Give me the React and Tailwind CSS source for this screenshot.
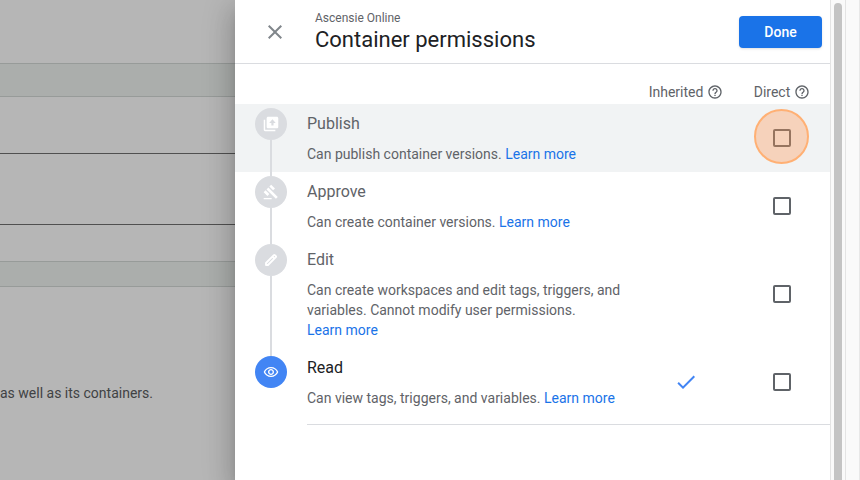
import {
  MdClose,
  MdHelpOutline,
  MdGavel,
  MdOutlineRemoveRedEye,
  MdCheck
} from 'react-icons/md'

function PublishIcon({ className }) {
  return (
    <svg viewBox="1 1 22 22" fill="currentColor" className={className}>
      <path d="M4 6H2v14c0 1.100.9 2 2 2h14v-2H4V6z" />
      <path d="M20 2H8c-1.100 0-2 .9-2 2v12c0 1.100.9 2 2 2h12c1.100 0 2-.9 2-2V4c0-1.100-.9-2-2-2zm-4.500 8.500V14h-3v-3.500H9.500L14 5.500l4.500 5h-3z" />
    </svg>
  )
}

function EditIcon({ className }) {
  return (
    <svg
      viewBox="0 0 24 24"
      fill="none"
      stroke="currentColor"
      strokeWidth="2.8"
      strokeLinejoin="round"
      className={className}
    >
      <path d="M4.500 19.500v-3L16.300 4.700c.4-.4 1-.4 1.400 0l1.600 1.600c.4.4.4 1 0 1.400L7.500 19.500z" />
      <path d="M14 7l3 3" />
    </svg>
  )
}

const permissions = [
  {
    name: 'Publish',
    description: 'Can publish container versions.',
    icon: PublishIcon,
    highlighted: true
  },
  {
    name: 'Approve',
    description: 'Can create container versions.',
    icon: MdGavel
  },
  {
    name: 'Edit',
    description:
      'Can create workspaces and edit tags, triggers, and variables. Cannot modify user permissions.',
    icon: EditIcon
  },
  {
    name: 'Read',
    description: 'Can view tags, triggers, and variables.',
    icon: MdOutlineRemoveRedEye,
    inherited: true
  }
]

function ColumnLabel({ children }) {
  return (
    <div className="w-24 flex items-center justify-center gap-1">
      <span>{children}</span>
      <button type="button" aria-label={`About ${children}`}>
        <MdHelpOutline className="w-4 h-4" />
      </button>
    </div>
  )
}

function PermissionRow({ permission, first, last }) {
  const { name, description, icon: Icon, inherited, highlighted } = permission
  const id = `direct-${name.toLowerCase()}`

  return (
    <li className={`flex pl-5 ${highlighted ? 'bg-[#f1f3f4]' : ''}`}>
      {/* Stepper */}
      <div className="w-8 mr-5 flex-shrink-0 flex flex-col items-center">
        <div
          className={`w-0.5 ${last ? 'h-2' : 'h-1'} ${first ? '' : 'bg-[#dadce0]'}`}
        />
        <div
          className={`w-8 h-8 flex-shrink-0 rounded-full flex items-center justify-center text-white ${
            inherited ? 'bg-[#4285f4]' : 'bg-[#dadce0]'
          }`}
        >
          <Icon className="w-4 h-4" />
        </div>
        {!last && <div className="w-0.5 flex-1 bg-[#dadce0]" />}
      </div>

      <div className="flex-1 min-w-0 py-2 pr-3">
        <label
          htmlFor={id}
          className={`block text-base leading-6 mb-2 ${
            inherited ? 'text-[#202124]' : 'text-[#5f6368]'
          }`}
        >
          {name}
        </label>
        <p className="text-sm leading-5 text-[#5f6368]">
          {description}{' '}
          <a href="#" className="text-[#1a73e8] whitespace-nowrap">
            Learn more
          </a>
        </p>
      </div>

      <div className="w-24 flex items-center justify-center">
        {inherited && (
          <MdCheck className="w-6 h-6 text-[#4285f4]" aria-label="Inherited" />
        )}
      </div>
      <div className="w-24 relative flex items-center justify-center">
        <input
          id={id}
          type="checkbox"
          className="appearance-none w-[18px] h-[18px] border-2 border-[#5f6368] rounded-xs checked:bg-[#1a73e8]"
        />
        {highlighted && (
          <span className="absolute top-[5px] left-5 w-[55px] h-[55px] rounded-full border-2 border-[#ffb074] bg-[rgba(255,150,80,0.35)] pointer-events-none" />
        )}
      </div>
    </li>
  )
}

function Backdrop() {
  return (
    <div className="w-[235px] flex-shrink-0 overflow-hidden bg-[#b6b6b6]">
      <div className="mt-[63px] h-[34px] bg-[#abaeac] border-y border-[#979b99]" />
      <div className="h-[57px] border-b border-[#505050]" />
      <div className="h-[71px] border-b border-[#505050]" />
      <div className="mt-9 h-[26px] bg-[#abaeac] border-y border-[#979b99]" />
      <p className="mt-24 text-sm leading-5 text-[#404244] whitespace-nowrap">
        as well as its containers.
      </p>
    </div>
  )
}

export default function App() {
  return (
    <div className="flex h-screen overflow-hidden bg-white font-['Roboto',sans-serif]">
      <Backdrop />

      {/* Side sheet */}
      <div className="flex-1 min-w-0 relative bg-white shadow-[0_8px_10px_-5px_rgba(0,0,0,0.2),0_16px_24px_2px_rgba(0,0,0,0.14),0_6px_30px_5px_rgba(0,0,0,0.12)]">
        <header className="h-16 flex items-center pl-7 pr-2 border-b border-[#dadce0]">
          <button type="button" aria-label="Close" className="mr-7 text-[#80868b]">
            <MdClose className="w-6 h-6" />
          </button>
          <div className="flex-1 min-w-0">
            <p className="text-xs leading-4 text-[#5f6368]">Ascensie Online</p>
            <h1 className="text-[22px] leading-7 text-[#202124]">
              Container permissions
            </h1>
          </div>
          <button
            type="button"
            className="h-8 min-w-[83px] px-6 rounded bg-[#1a73e8] text-white text-sm font-medium shadow-sm"
          >
            Done
          </button>
        </header>

        <div className="h-10 pt-4 flex justify-end text-sm text-[#5f6368]">
          <ColumnLabel>Inherited</ColumnLabel>
          <ColumnLabel>Direct</ColumnLabel>
        </div>

        <ul>
          {permissions.map((permission, i) => (
            <PermissionRow
              key={permission.name}
              permission={permission}
              first={i === 0}
              last={i === permissions.length - 1}
            />
          ))}
        </ul>
        <div className="mt-2 ml-[72px] border-t border-[#dadce0]" />
      </div>

      {/* Scroll track */}
      <div className="relative w-4 flex-shrink-0 flex justify-center pt-[3px] bg-[#fafafa] border-x border-[#e4e4e4]">
        <div className="w-2 rounded-t-full bg-[#c4c4c4]" />
      </div>
      <div className="relative w-3.5 flex-shrink-0 bg-[#fafafa] border-r border-[#e8e8e8]" />
    </div>
  )
}
